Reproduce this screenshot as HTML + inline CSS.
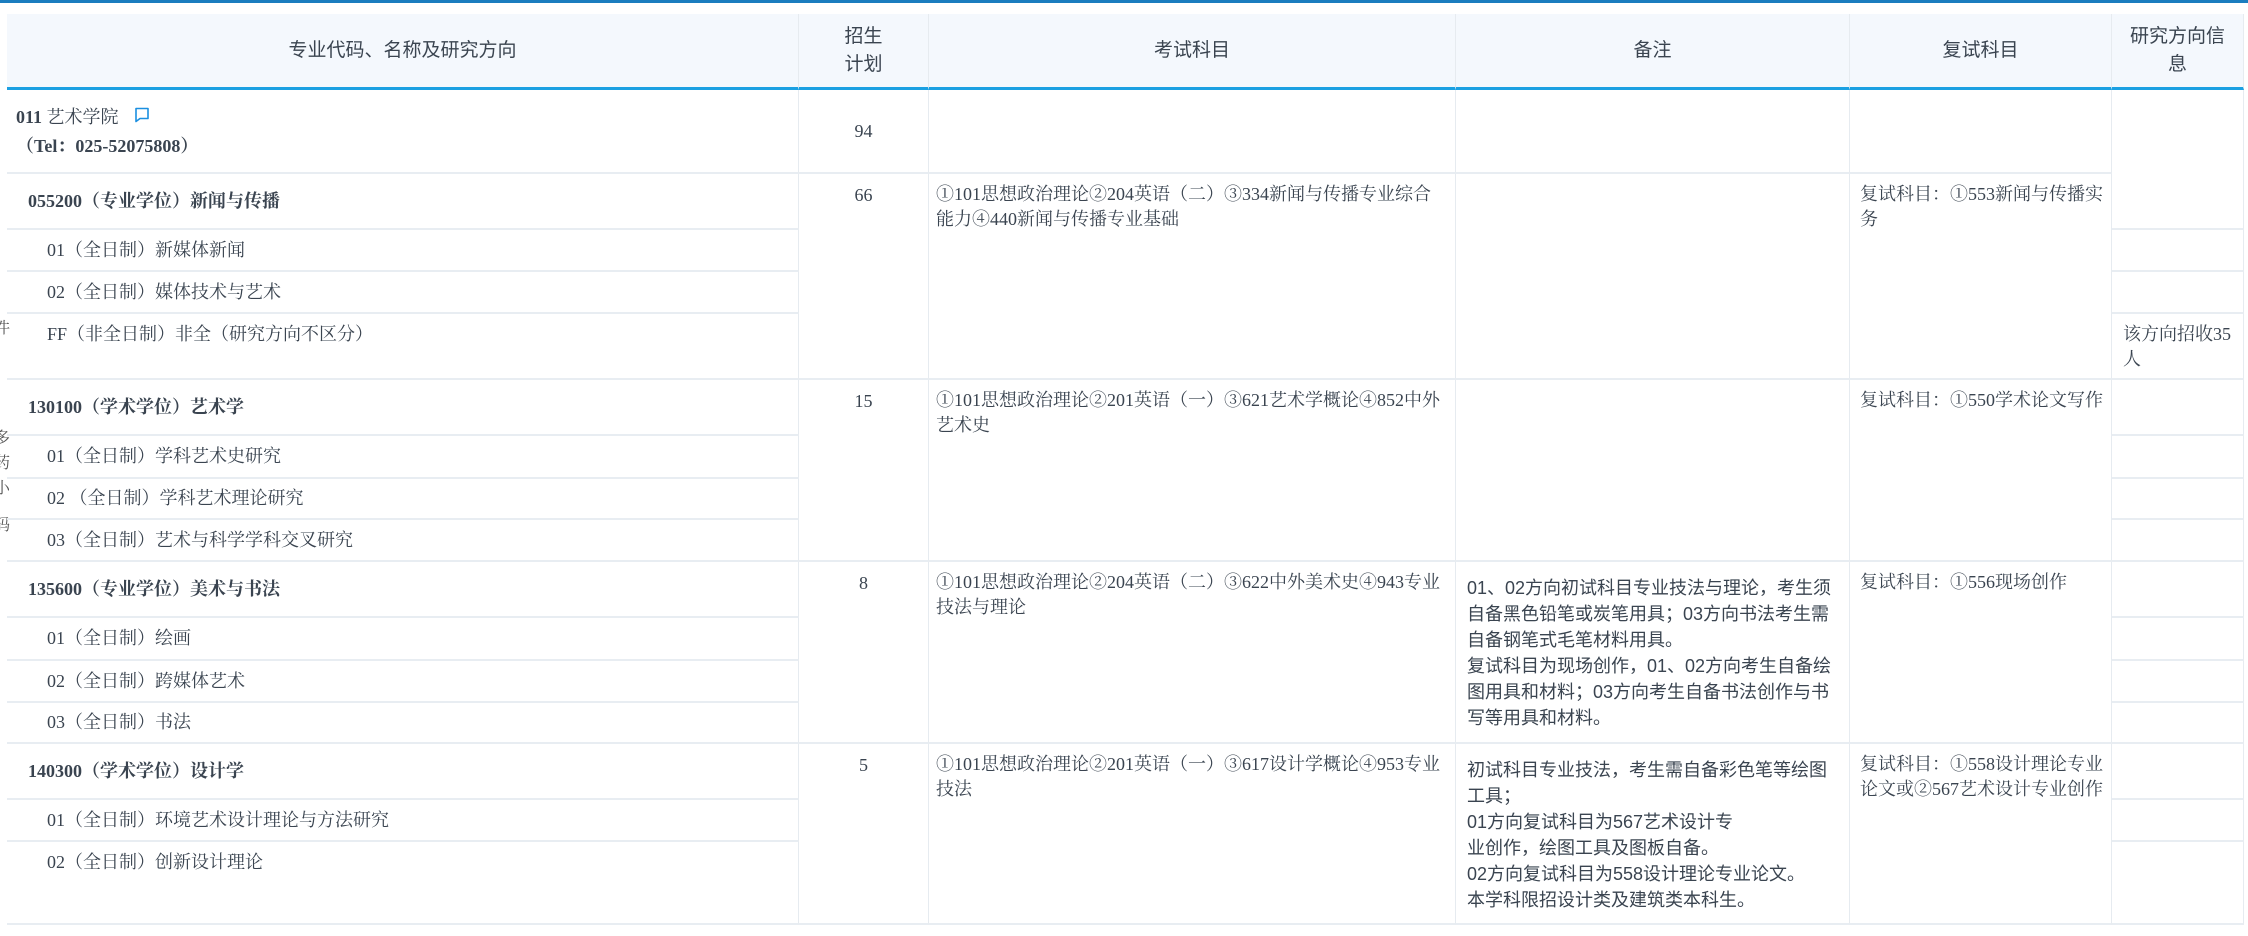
<!DOCTYPE html>
<html><head><meta charset="utf-8"><style>
*{margin:0;padding:0;box-sizing:border-box}
body{width:2248px;height:936px;background:#fff;position:relative;overflow:hidden;font-family:"Liberation Serif","Noto Serif CJK SC",serif;color:#3a4450;font-size:18px}
.bar{position:absolute;left:0;top:0;width:2248px;height:3px;background:#1b7dbf}
.c{position:absolute;border-right:1px solid #e6ebf0;border-bottom:2px solid #e8edf2;overflow:hidden;line-height:25px}
.h{background:#f4f8fd;border-bottom:3px solid #1ba0e2;text-align:center;display:flex;align-items:center;justify-content:center;font-size:19px;line-height:28px;font-family:"Liberation Sans","Noto Sans CJK SC",sans-serif;color:#3a4450}
.b{font-weight:bold}
.s{font-family:"Liberation Sans","Noto Sans CJK SC",sans-serif}
.side{position:absolute;left:-6px;font-size:16px;color:#555}
</style></head><body>
<div class="bar"></div>
<div class="side" style="top:315px">件</div>
<div class="side" style="top:425px">多</div>
<div class="side" style="top:450px">药</div>
<div class="side" style="top:475px">小</div>
<div class="side" style="top:512px">码</div>

<div class="c h" style="left:7px;top:14px;width:792px;height:76px">专业代码、名称及研究方向</div>
<div class="c h" style="left:799px;top:14px;width:130px;height:76px">招生<br>计划</div>
<div class="c h" style="left:929px;top:14px;width:527px;height:76px">考试科目</div>
<div class="c h" style="left:1456px;top:14px;width:394px;height:76px">备注</div>
<div class="c h" style="left:1850px;top:14px;width:262px;height:76px">复试科目</div>
<div class="c h" style="left:2112px;top:14px;width:132px;height:76px">研究方向信<br>息</div>

<div class="c" style="left:7px;top:90px;width:792px;height:84px;padding:13px 0 0 9px;line-height:29px"><span class="b">011</span> 艺术学院 <svg width="18" height="18" viewBox="0 0 18 18" style="vertical-align:-1px;margin-left:10px"><path d="M3 2.5h12v10H7l-4 3z" fill="none" stroke="#1b8fe0" stroke-width="1.6" stroke-linejoin="round"/></svg><br><span class="b">（Tel：025-52075808）</span></div>
<div class="c b" style="left:7px;top:174px;width:792px;height:56px;padding-left:21px;line-height:54px">055200（专业学位）新闻与传播</div>
<div class="c" style="left:7px;top:230px;width:792px;height:42px;padding-left:40px;line-height:40px">01（全日制）新媒体新闻</div>
<div class="c" style="left:7px;top:272px;width:792px;height:42px;padding-left:40px;line-height:40px">02（全日制）媒体技术与艺术</div>
<div class="c" style="left:7px;top:314px;width:792px;height:66px;padding-left:40px;line-height:40px">FF（非全日制）非全（研究方向不区分）</div>
<div class="c b" style="left:7px;top:380px;width:792px;height:56px;padding-left:21px;line-height:54px">130100（学术学位）艺术学</div>
<div class="c" style="left:7px;top:436px;width:792px;height:43px;padding-left:40px;line-height:41px">01（全日制）学科艺术史研究</div>
<div class="c" style="left:7px;top:479px;width:792px;height:41px;padding-left:40px;line-height:39px">02 （全日制）学科艺术理论研究</div>
<div class="c" style="left:7px;top:520px;width:792px;height:42px;padding-left:40px;line-height:40px">03（全日制）艺术与科学学科交叉研究</div>
<div class="c b" style="left:7px;top:562px;width:792px;height:56px;padding-left:21px;line-height:54px">135600（专业学位）美术与书法</div>
<div class="c" style="left:7px;top:618px;width:792px;height:43px;padding-left:40px;line-height:41px">01（全日制）绘画</div>
<div class="c" style="left:7px;top:661px;width:792px;height:42px;padding-left:40px;line-height:40px">02（全日制）跨媒体艺术</div>
<div class="c" style="left:7px;top:703px;width:792px;height:41px;padding-left:40px;line-height:39px">03（全日制）书法</div>
<div class="c b" style="left:7px;top:744px;width:792px;height:56px;padding-left:21px;line-height:54px">140300（学术学位）设计学</div>
<div class="c" style="left:7px;top:800px;width:792px;height:42px;padding-left:40px;line-height:40px">01（全日制）环境艺术设计理论与方法研究</div>
<div class="c" style="left:7px;top:842px;width:792px;height:83px;padding-left:40px;line-height:40px">02（全日制）创新设计理论</div>

<div class="c" style="left:799px;top:90px;width:130px;height:84px;text-align:center;line-height:82px">94</div>
<div class="c" style="left:799px;top:174px;width:130px;height:206px;text-align:center;padding-top:9px">66</div>
<div class="c" style="left:799px;top:380px;width:130px;height:182px;text-align:center;padding-top:9px">15</div>
<div class="c" style="left:799px;top:562px;width:130px;height:182px;text-align:center;padding-top:9px">8</div>
<div class="c" style="left:799px;top:744px;width:130px;height:181px;text-align:center;padding-top:9px">5</div>

<div class="c" style="left:929px;top:90px;width:527px;height:84px"></div>
<div class="c" style="left:929px;top:174px;width:527px;height:206px;padding:8px 8px 0 7px">①101思想政治理论②204英语（二）③334新闻与传播专业综合能力④440新闻与传播专业基础</div>
<div class="c" style="left:929px;top:380px;width:527px;height:182px;padding:8px 8px 0 7px">①101思想政治理论②201英语（一）③621艺术学概论④852中外艺术史</div>
<div class="c" style="left:929px;top:562px;width:527px;height:182px;padding:8px 8px 0 7px">①101思想政治理论②204英语（二）③622中外美术史④943专业技法与理论</div>
<div class="c" style="left:929px;top:744px;width:527px;height:181px;padding:8px 8px 0 7px">①101思想政治理论②201英语（一）③617设计学概论④953专业技法</div>

<div class="c" style="left:1456px;top:90px;width:394px;height:84px"></div>
<div class="c" style="left:1456px;top:174px;width:394px;height:206px"></div>
<div class="c" style="left:1456px;top:380px;width:394px;height:182px"></div>
<div class="c s" style="left:1456px;top:562px;width:394px;height:182px;padding:13px 6px 0 11px;line-height:26px;font-size:18px">01、02方向初试科目专业技法与理论，考生须自备黑色铅笔或炭笔用具；03方向书法考生需自备钢笔式毛笔材料用具。<br>复试科目为现场创作，01、02方向考生自备绘图用具和材料；03方向考生自备书法创作与书写等用具和材料。</div>
<div class="c s" style="left:1456px;top:744px;width:394px;height:181px;padding:13px 6px 0 11px;line-height:26px;font-size:18px">初试科目专业技法，考生需自备彩色笔等绘图工具；<br>01方向复试科目为567艺术设计专<br>业创作，绘图工具及图板自备。<br>02方向复试科目为558设计理论专业论文。<br>本学科限招设计类及建筑类本科生。</div>

<div class="c" style="left:1850px;top:90px;width:262px;height:84px"></div>
<div class="c" style="left:1850px;top:174px;width:262px;height:206px;padding:8px 6px 0 10px">复试科目：①553新闻与传播实务</div>
<div class="c" style="left:1850px;top:380px;width:262px;height:182px;padding:8px 6px 0 10px">复试科目：①550学术论文写作</div>
<div class="c" style="left:1850px;top:562px;width:262px;height:182px;padding:8px 6px 0 10px">复试科目：①556现场创作</div>
<div class="c" style="left:1850px;top:744px;width:262px;height:181px;padding:8px 6px 0 10px">复试科目：①558设计理论专业论文或②567艺术设计专业创作</div>

<div class="c" style="left:2112px;top:90px;width:132px;height:140px"></div>
<div class="c" style="left:2112px;top:230px;width:132px;height:42px"></div>
<div class="c" style="left:2112px;top:272px;width:132px;height:42px"></div>
<div class="c" style="left:2112px;top:314px;width:132px;height:66px;padding:8px 4px 0 11px">该方向招收35人</div>
<div class="c" style="left:2112px;top:380px;width:132px;height:56px"></div>
<div class="c" style="left:2112px;top:436px;width:132px;height:43px"></div>
<div class="c" style="left:2112px;top:479px;width:132px;height:41px"></div>
<div class="c" style="left:2112px;top:520px;width:132px;height:42px"></div>
<div class="c" style="left:2112px;top:562px;width:132px;height:56px"></div>
<div class="c" style="left:2112px;top:618px;width:132px;height:43px"></div>
<div class="c" style="left:2112px;top:661px;width:132px;height:42px"></div>
<div class="c" style="left:2112px;top:703px;width:132px;height:41px"></div>
<div class="c" style="left:2112px;top:744px;width:132px;height:56px"></div>
<div class="c" style="left:2112px;top:800px;width:132px;height:42px"></div>
<div class="c" style="left:2112px;top:842px;width:132px;height:83px"></div>
</body></html>
